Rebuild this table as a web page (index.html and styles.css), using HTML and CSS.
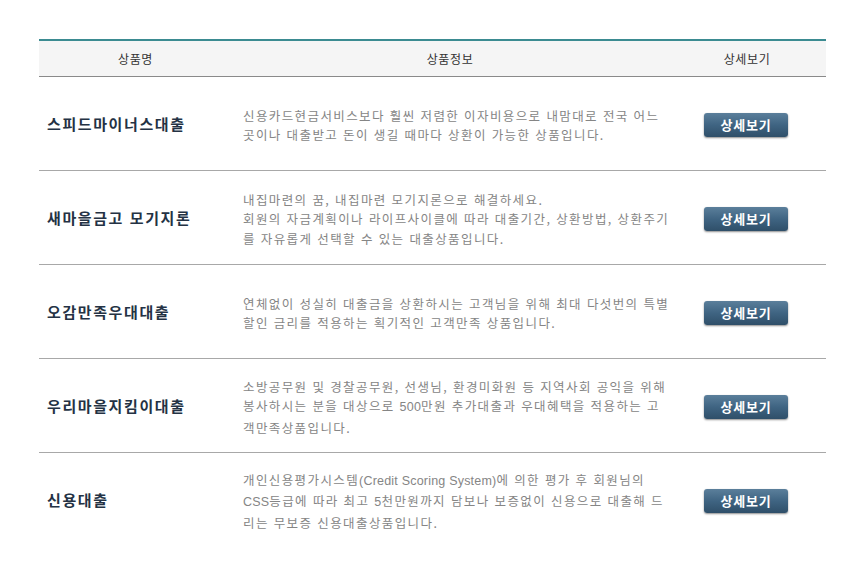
FILE: index.html
```html
<!DOCTYPE html>
<html lang="ko">
<head>
<meta charset="utf-8">
<link rel="stylesheet" href="styles.css">
</head>
<body>
<div class="wrap">
  <table class="products">
    <colgroup>
      <col class="c-name">
      <col class="c-info">
      <col class="c-btn">
    </colgroup>
    <thead>
      <tr><th>상품명</th><th>상품정보</th><th>상세보기</th></tr>
    </thead>
    <tbody>
      <tr>
        <td class="name">스피드마이너스대출</td>
        <td class="info">신용카드현금서비스보다 훨씬 저렴한 이자비용으로 내맘대로 전국 어느<br>곳이나 대출받고 돈이 생길 때마다 상환이 가능한 상품입니다.</td>
        <td class="btn-cell"><a class="btn">상세보기</a></td>
      </tr>
      <tr>
        <td class="name">새마을금고 모기지론</td>
        <td class="info">내집마련의 꿈, 내집마련 모기지론으로 해결하세요.<br>회원의 자금계획이나 라이프사이클에 따라 대출기간, 상환방법, 상환주기<br>를 자유롭게 선택할 수 있는 대출상품입니다.</td>
        <td class="btn-cell"><a class="btn">상세보기</a></td>
      </tr>
      <tr>
        <td class="name">오감만족우대대출</td>
        <td class="info">연체없이 성실히 대출금을 상환하시는 고객님을 위해 최대 다섯번의 특별<br>할인 금리를 적용하는 획기적인 고객만족 상품입니다.</td>
        <td class="btn-cell"><a class="btn">상세보기</a></td>
      </tr>
      <tr>
        <td class="name">우리마을지킴이대출</td>
        <td class="info">소방공무원 및 경찰공무원, 선생님, 환경미화원 등 지역사회 공익을 위해<br>봉사하시는 분을 대상으로 <span class="lat">500</span>만원 추가대출과 우대혜택을 적용하는 고<br>객만족상품입니다.</td>
        <td class="btn-cell"><a class="btn">상세보기</a></td>
      </tr>
      <tr class="last">
        <td class="name">신용대출</td>
        <td class="info">개인신용평가시스템<span class="lat">(Credit Scoring System)</span>에 의한 평가 후 회원님의<br><span class="lat">CSS</span>등급에 따라 최고 <span class="lat">5</span>천만원까지 담보나 보증없이 신용으로 대출해 드<br>리는 무보증 신용대출상품입니다.</td>
        <td class="btn-cell"><a class="btn">상세보기</a></td>
      </tr>
    </tbody>
  </table>
</div>
</body>
</html>
```

FILE: styles.css
```css
html, body {
  margin: 0;
  padding: 0;
  background: #ffffff;
}
body {
  font-family: "Noto Sans CJK KR", "Noto Sans", sans-serif;
}
.wrap {
  padding: 39px 36px 0 39px;
}
.products {
  width: 787px;
  border-collapse: collapse;
  table-layout: fixed;
  border-top: 2px solid #3b8b91;
}
.c-name { width: 193px; }
.c-info { width: 436px; }
.c-btn { width: 158px; }
.products th {
  height: 35px;
  padding: 0;
  background: #f5f5f5;
  border-bottom: 1px solid #8a8a8a;
  font-size: 12px;
  font-weight: normal;
  color: #333;
  text-align: center;
  vertical-align: middle;
  letter-spacing: 0.6px;
}
.products td {
  height: 93px;
  padding: 0;
  border-bottom: 1px solid #a8a8a8;
  vertical-align: middle;
}
.products tr.last td {
  border-bottom: none;
}
.products td.name {
  padding-left: 8px;
  font-size: 15px;
  font-weight: bold;
  color: #243244;
  letter-spacing: 1.6px;
}
.products td.info {
  height: 90px;
  padding: 3px 0 0 11px;
  font-size: 12.5px;
  line-height: 19.5px;
  color: #858585;
  letter-spacing: 1.4px;
  white-space: nowrap;
}
.lat {
  font-family: "Liberation Sans", "Noto Sans CJK KR", sans-serif;
  letter-spacing: 0.2px;
}
.btn-cell {
  text-align: center;
}
.btn {
  display: inline-block;
  width: 84px;
  height: 24px;
  line-height: 23px;
  margin-left: -2px;
  border-radius: 3px;
  background: linear-gradient(#5b7f9b, #3f6482 50%, #2f4f69);
  box-shadow: 0 1px 2px rgba(0,0,0,0.45);
  color: #fff;
  font-size: 13px;
  font-weight: bold;
  text-align: center;
  letter-spacing: 0.8px;
}
```
